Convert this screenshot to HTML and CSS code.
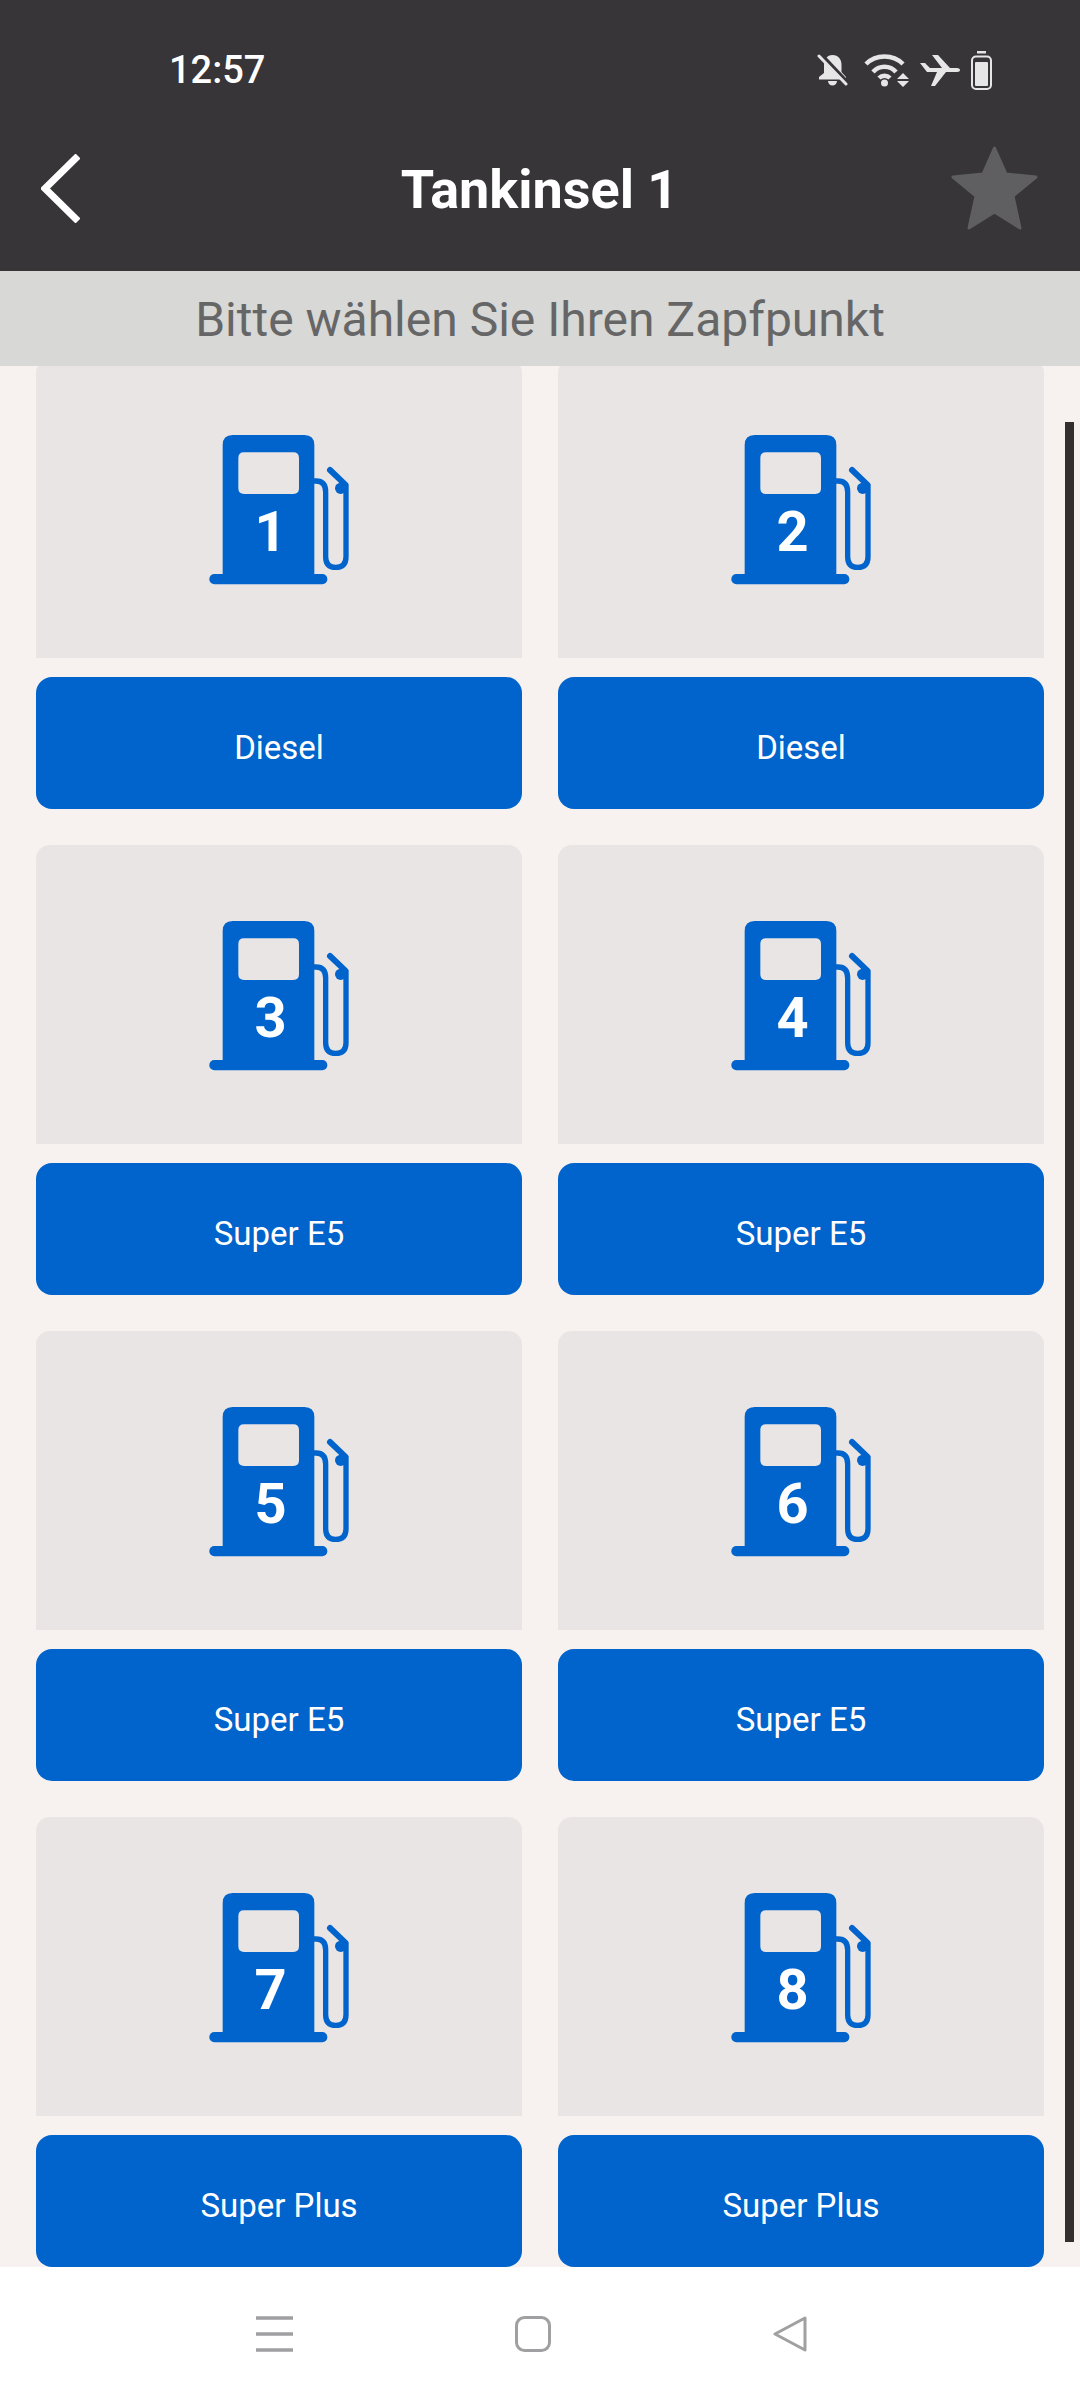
FILE: index.html
```html
<!DOCTYPE html>
<html lang="de">
<head>
    <meta charset="UTF-8">
    <meta name="viewport" content="width=device-width, initial-scale=1.0">
    <title>Tankinsel 1</title>
    <link rel="stylesheet" href="styles.css">
</head>
<body>

    <!-- shared pump drawing -->
    <svg class="defs" width="0" height="0">
        <symbol id="pump" viewBox="84 70 426 453">
            <path fill-rule="evenodd" d="M128 495V103Q128 73 158 73H373Q403 73 403 103V495ZM192 125Q175 125 175 142V233Q175 250 192 250H340Q357 250 357 233V142Q357 125 340 125Z"/>
            <rect x="88" y="490" width="354" height="31" rx="15"/>
            <path class="hose" d="M403 211H408Q437 211 437 244V438Q437 470 467 470Q498 470 498 438V226"/>
            <path class="nozzle" d="M450 178L496 222"/>
            <circle cx="482" cy="233" r="17"/>
        </symbol>
    </svg>

    <div class="screen">
        <header class="top">
            <div class="status">
                <span class="time">12:57</span>
                <div class="status-icons">
                    <!-- bell muted -->
                    <svg class="ic-bell" width="31" height="32" viewBox="0 0 31 32">
                        <path fill="#e6e6e6" d="M15.500 1c6 0 9 4.500 9 10v7l4.500 5v2.500H2V23l5-4v-8c0-5.500 3-10 8.500-10zM11 27h9c0 2.500-2 4.500-4.500 4.500S11 29.500 11 27z"/>
                        <path stroke="#373538" stroke-width="5" d="M2 -1l29 31"/>
                        <path stroke="#e6e6e6" stroke-width="3" stroke-linecap="round" d="M2 2l27 28"/>
                    </svg>
                    <!-- wifi with arrows -->
                    <svg class="ic-wifi" width="45" height="33" viewBox="0 0 45 33" fill="none">
                        <path stroke="#e6e6e6" stroke-width="4.500" d="M2 10C12 0 29 0 39 10M9 18C15 11 26 11 32 18M15 24C18 21 23 21 26 24"/>
                        <circle cx="20.500" cy="29" r="3.500" fill="#e6e6e6"/>
                        <path fill="#e6e6e6" d="M39 19l6 6H33zM33 27h12l-6 6z"/>
                    </svg>
                    <!-- airplane -->
                    <svg class="ic-plane" width="40" height="33" viewBox="0 0 40 33">
                        <path fill="#e6e6e6" d="M0 9h5l5 5h12L12 1h6l12 13h7c2 0 3 1 3 2s-1 2-3 2H26L15 32h-4l6-14H7z"/>
                    </svg>
                    <!-- battery -->
                    <svg class="ic-batt" width="21" height="39" viewBox="0 0 21 39">
                        <rect x="6" y="0" width="9" height="2.500" fill="#e6e6e6"/>
                        <rect x="1" y="5.500" width="19" height="32.500" rx="4" fill="none" stroke="#e6e6e6" stroke-width="2"/>
                        <rect x="4" y="11" width="13" height="24" rx="1" fill="#e6e6e6"/>
                    </svg>
                </div>
            </div>
            <div class="toolbar">
                <svg class="back" width="39" height="69" viewBox="0 0 39 69" fill="none">
                    <path stroke="#fff" stroke-width="7" d="M37 2L4 34.500 37 67"/>
                </svg>
                <h1 class="title">Tankinsel 1</h1>
                <svg class="star" width="87" height="84" viewBox="0 0 87 84">
                    <path fill="#5f5e61" stroke="#5f5e61" stroke-width="3" stroke-linejoin="round" d="M43.500 2L55 28 85 31 62 50 69 82 43.500 66 18 82 25 50 2 31 32 28Z"/>
                </svg>
            </div>
        </header>

        <div class="hint">Bitte wählen Sie Ihren Zapfpunkt</div>

        <main class="list">
            <div class="scrollbar"></div>
            <div class="grid">
                <div class="point">
                    <div class="tile"><div class="pump"><svg><use href="#pump"/></svg><span class="num">1</span></div></div>
                    <div class="fuel">Diesel</div>
                </div>
                <div class="point">
                    <div class="tile"><div class="pump"><svg><use href="#pump"/></svg><span class="num">2</span></div></div>
                    <div class="fuel">Diesel</div>
                </div>
                <div class="point">
                    <div class="tile"><div class="pump"><svg><use href="#pump"/></svg><span class="num">3</span></div></div>
                    <div class="fuel">Super E5</div>
                </div>
                <div class="point">
                    <div class="tile"><div class="pump"><svg><use href="#pump"/></svg><span class="num">4</span></div></div>
                    <div class="fuel">Super E5</div>
                </div>
                <div class="point">
                    <div class="tile"><div class="pump"><svg><use href="#pump"/></svg><span class="num">5</span></div></div>
                    <div class="fuel">Super E5</div>
                </div>
                <div class="point">
                    <div class="tile"><div class="pump"><svg><use href="#pump"/></svg><span class="num">6</span></div></div>
                    <div class="fuel">Super E5</div>
                </div>
                <div class="point">
                    <div class="tile"><div class="pump"><svg><use href="#pump"/></svg><span class="num">7</span></div></div>
                    <div class="fuel">Super Plus</div>
                </div>
                <div class="point">
                    <div class="tile"><div class="pump"><svg><use href="#pump"/></svg><span class="num">8</span></div></div>
                    <div class="fuel">Super Plus</div>
                </div>
            </div>
        </main>

        <nav class="navbar">
            <svg width="37" height="36" viewBox="0 0 37 36">
                <path stroke="#a0a0a2" stroke-width="3.500" d="M0 2h37M0 18h37M0 34h37"/>
            </svg>
            <svg width="36" height="36" viewBox="0 0 36 36" fill="none">
                <rect x="1.500" y="1.500" width="33" height="33" rx="8" stroke="#a0a0a2" stroke-width="3"/>
            </svg>
            <svg width="34" height="36" viewBox="0 0 34 36" fill="none">
                <path stroke="#a0a0a2" stroke-width="3" stroke-linejoin="round" d="M32 2V34L2 18Z"/>
            </svg>
        </nav>
    </div>

</body>
</html>
```

FILE: styles.css
```css
* {
    box-sizing: border-box;
}
body {
    margin: 0;
    font-family: Roboto, "Noto Sans", sans-serif;
    background-color: #f7f2f0;
}
.defs {
    position: absolute;
}
.screen {
    width: 1080px;
    height: 2400px;
    display: flex;
    flex-direction: column;
    overflow: hidden;
}

/* header */
.top {
    height: 271px;
    background-color: #373538;
    flex-shrink: 0;
}
.status {
    height: 105px;
    padding: 35px 88px 0 169px;
    display: flex;
    align-items: center;
    justify-content: space-between;
}
.time {
    color: #fff;
    font-size: 38px;
    font-weight: 500;
}
.status-icons {
    display: flex;
    align-items: center;
    gap: 11px;
}
.ic-bell {
    margin-right: 5px;
}
.toolbar {
    height: 166px;
    padding: 0 42px 0 41px;
    display: grid;
    grid-template-columns: 1fr auto 1fr;
    align-items: center;
}
.star {
    justify-self: end;
}
.title {
    margin: 0;
    padding-top: 2px;
    color: #fff;
    font-size: 54px;
    font-weight: 700;
}

/* subheader */
.hint {
    height: 95px;
    padding-top: 2px;
    flex-shrink: 0;
    display: flex;
    align-items: center;
    justify-content: center;
    background-color: #d8d8d6;
    color: #666666;
    font-size: 48px;
}

/* pump list */
.list {
    position: relative;
    flex: 1;
    overflow: hidden;
}
.scrollbar {
    position: absolute;
    top: 56px;
    right: 6px;
    width: 9px;
    height: 1820px;
    background-color: #333130;
}
.grid {
    margin-top: -7px;
    padding: 0 36px;
    display: grid;
    grid-template-columns: 486px 486px;
    column-gap: 36px;
    row-gap: 36px;
}
.point {
    display: flex;
    flex-direction: column;
    gap: 19px;
}
.tile {
    height: 299px;
    padding-top: 2px;
    display: flex;
    align-items: center;
    justify-content: center;
    background-color: #e9e5e4;
    border-radius: 14px 14px 0 0;
}
.pump {
    position: relative;
    width: 142px;
    height: 151px;
}
.pump svg {
    display: block;
    width: 142px;
    height: 151px;
    fill: #0064cc;
}
.hose {
    fill: none;
    stroke: #0064cc;
    stroke-width: 16;
    stroke-linecap: round;
}
.nozzle {
    fill: none;
    stroke: #0064cc;
    stroke-width: 18;
    stroke-linecap: round;
}
.num {
    position: absolute;
    left: 17px;
    width: 91px;
    top: 56px;
    color: #fff;
    font-size: 56px;
    font-weight: 700;
    line-height: 84px;
    text-align: center;
}
.fuel {
    height: 132px;
    padding-top: 8px;
    display: flex;
    align-items: center;
    justify-content: center;
    background-color: #0064cc;
    border-radius: 16px;
    color: #fff;
    font-size: 33px;
}

/* android nav */
.navbar {
    height: 133px;
    flex-shrink: 0;
    padding: 49px 273px 0 256px;
    display: flex;
    align-items: flex-start;
    justify-content: space-between;
    background-color: #fff;
}
```
